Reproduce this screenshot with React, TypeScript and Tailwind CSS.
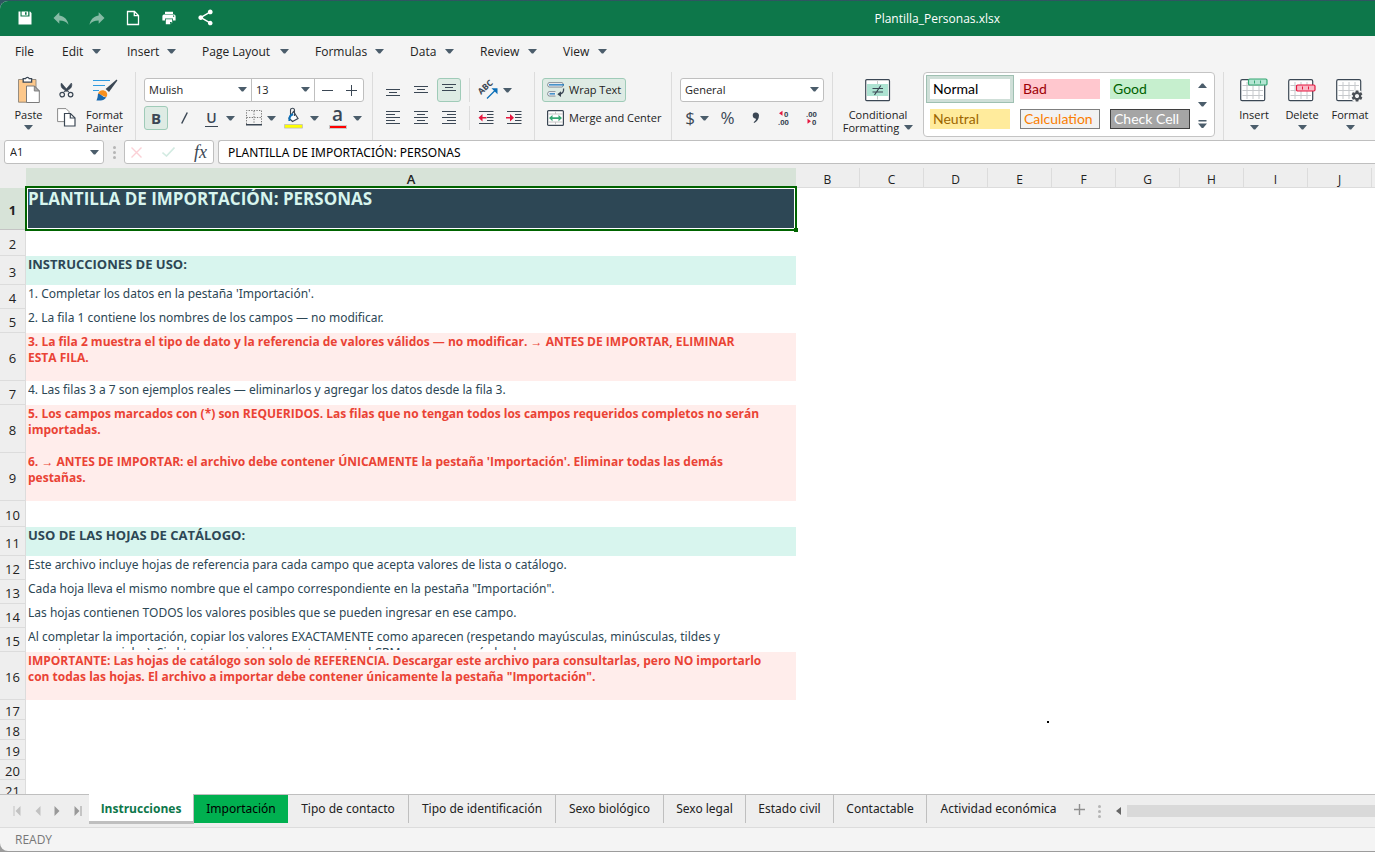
import React from "react";
import { MdReply, MdShare, MdSettings } from "react-icons/md";

const INK = "#3b4754";

/* ---------- small shared pieces ---------- */

function Caret({ className = "" }: { className?: string }) {
  return (
    <svg width="9" height="5" viewBox="0 0 9 5" className={"shrink-0 " + className} aria-hidden="true">
      <path d="M0 0h9L5.2 4.4h-1.4z" fill="#4b5d6b" />
    </svg>
  );
}

function Separator() {
  return <div className="w-px shrink-0 self-stretch bg-[#dcdcdc]" />;
}

function Tool({
  label,
  active = false,
  className = "w-7",
  children,
}: {
  label: string;
  active?: boolean;
  className?: string;
  children: React.ReactNode;
}) {
  return (
    <button
      type="button"
      aria-label={label}
      className={
        "flex h-6 shrink-0 items-center justify-center rounded-[3px] border " +
        (active ? "border-[#9fcbb8] bg-[#deebe4] " : "border-transparent ") +
        className
      }
    >
      {children}
    </button>
  );
}

function Select({ label, value, className }: { label: string; value: string; className: string }) {
  return (
    <div className={"relative h-full " + className}>
      <select
        aria-label={label}
        defaultValue={value}
        className="block h-full w-full appearance-none bg-transparent pl-1 text-[11px] text-[#222] outline-none"
      >
        <option>{value}</option>
      </select>
      <Caret className="pointer-events-none absolute top-2 right-1" />
    </div>
  );
}

/* ---------- title bar icons ---------- */

function SaveIcon() {
  return (
    <svg width="14" height="14" viewBox="0 0 14 14" aria-hidden="true">
      <path d="M.5.5h2v5h9v-5h.6l1.4 1.4v11.6H.5z" fill="#fff" />
      <path d="M3.6.5h6.6v4H3.6z" fill="#fff" />
      <path d="M7 1.3h1.6v2.4H7z" fill="#0d774a" />
    </svg>
  );
}

function NewIcon() {
  return (
    <svg width="14" height="16" viewBox="0 0 14 16" fill="none" stroke="#fff" strokeWidth="1.3" aria-hidden="true">
      <path d="M1.5 1.5h7l4 4v9h-11z" />
      <path d="M8.3 1.5v4.2h4.2" />
    </svg>
  );
}

function PrintIcon() {
  return (
    <svg width="14" height="14" viewBox="0 0 14 14" aria-hidden="true">
      <path d="M3 .8h8V3H3z" fill="#fff" />
      <path d="M2 3.6h10a1.6 1.6 0 0 1 1.6 1.6v4.4H11V7.4H3v2.2H.4V5.2A1.6 1.6 0 0 1 2 3.6z" fill="#fff" />
      <path d="M3.8 8.2h6.4v3L8.3 13.2H3.8z" fill="#fff" />
      <path d="M8 11h2.2L8 13.2z" fill="#0d774a" />
      <path d="M11 4.6h1.2v1.2H11z" fill="#0d774a" />
    </svg>
  );
}

/* ---------- ribbon icons ---------- */

function PasteIcon() {
  return (
    <svg width="24" height="28" viewBox="0 0 24 28" aria-hidden="true">
      <path d="M1.5 3.5h17.5v22.7H1.5z" fill="#fdc88b" stroke="#8b8378" strokeWidth="0.9" />
      <path d="M6.2 2.6h2.4a1.9 1.9 0 0 1 3.6 0h2.4v3.6H6.2z" fill="#fff" stroke={INK} strokeWidth="1.3" />
      <path d="M9.5 10h8l4.8 4.8v11.7H9.5z" fill="#fff" stroke="#7b7b7b" strokeWidth="1" />
      <path d="M17.3 10v5h5z" fill="#aaa" stroke="#7b7b7b" strokeWidth="0.9" />
    </svg>
  );
}

function CutIcon() {
  return (
    <svg width="15" height="16" viewBox="0 0 15 16" fill="none" stroke={INK} aria-hidden="true">
      <circle cx="3.2" cy="12.6" r="2.3" strokeWidth="1.2" />
      <circle cx="11.6" cy="12.6" r="2.3" strokeWidth="1.2" />
      <path d="M4.3 10.6 12.4 1c.9 1.800.4 4.300-1.400 5.700L6.600 9.600" fill={INK} strokeWidth="0.6" />
      <path d="M10.500 10.600 2.400 1c-.9 1.800-.4 4.300 1.400 5.700l4.400 2.900" fill={INK} strokeWidth="0.6" />
    </svg>
  );
}

function CopyIcon() {
  return (
    <svg width="19" height="19" viewBox="0 0 19 19" fill="#fff" aria-hidden="true">
      <path d="M.6.6H9l3 3v10H.6z" stroke="#8a8a8a" strokeWidth="1" />
      <path d="M7.500 5.500h6l4.500 4.500v8H7.500z" stroke={INK} strokeWidth="1.200" />
      <path d="M13.300 5.500V10H18" fill="none" stroke={INK} strokeWidth="1.200" />
    </svg>
  );
}

function PainterIcon() {
  return (
    <svg width="26" height="24" viewBox="0 0 26 24" aria-hidden="true">
      <path d="M1 2.500h17M1 7.500h12M1 12.500h6" stroke="#2f9be0" strokeWidth="1.200" />
      <path d="m24.600 1.600.8.800-8.400 11.500-3.400-2.800z" fill={INK} />
      <path d="M6 15.500c1.200-3.300 5.400-4.500 8.200-1.700 1.600 1.800 1.300 4.400-.2 5.400z" fill="#f78f1e" />
      <path d="M6 15.500c-.2 3-.6 5.200-1.600 7 4.200.4 8.400-.3 10-3.600-2.800 1.400-5-2.600-8.400-3.400z" fill="#1a68ad" />
    </svg>
  );
}

function BordersIcon() {
  return (
    <svg width="18" height="16" viewBox="0 0 18 16" fill="none" stroke={INK} aria-hidden="true">
      <path d="M1.500 14V.5h15V14M9 1v13M1.500 7.500h15" strokeDasharray="1.300 1.300" strokeWidth="1" stroke="#777" />
      <path d="M1 14.800h16" strokeWidth="1.600" />
    </svg>
  );
}

function FillIcon() {
  return (
    <svg width="20" height="22" viewBox="0 0 20 22" aria-hidden="true">
      <path d="M9.500 4.500 14 11.500 8.500 14.500 5 11.200z" fill="#fff" stroke={INK} strokeWidth="1.200" />
      <path d="M6.500 9V3.200C6.500.6 10.500.6 10.500 3.200V9" fill="none" stroke={INK} strokeWidth="1.100" />
      <path d="M9.200 7.200C5.800 8 5 10.400 5.400 14" fill="none" stroke="#0b6fb8" strokeWidth="2" />
      <path d="M.5 17.500h18v3.600H.5z" fill="#ff0" stroke="#bcbcbc" strokeWidth="0.800" />
    </svg>
  );
}

function FontColorGlyph() {
  return (
    <span className="flex flex-col items-center">
      <span className="h-[18px] text-[19px] leading-[15px] font-semibold text-[#3b4754]">a</span>
      <span className="h-1 w-[18px] border border-[#c9c9c9] bg-[#f00]" />
    </span>
  );
}

function Lines({ rows }: { rows: [number, number, number][] }) {
  return (
    <svg width="16" height="16" viewBox="0 0 16 16" stroke={INK} strokeWidth="1" aria-hidden="true">
      {rows.map(([x1, x2, y]) => (
        <path key={y} d={`M${x1} ${y + 0.5}H${x2}`} />
      ))}
    </svg>
  );
}

function OrientationIcon() {
  return (
    <svg width="22" height="20" viewBox="0 0 22 20" overflow="visible" aria-hidden="true">
      <text x="0" y="0" transform="translate(4 15) rotate(-42)" fontSize="8.500" fontWeight="700" fill={INK} fontFamily="Open Sans, sans-serif">
        ABC
      </text>
      <path d="M10 18.500 18.500 10" stroke="#0b6fb8" strokeWidth="1.300" />
      <path d="M14.500 8.200h6v6z" fill="#0b6fb8" />
    </svg>
  );
}

function IndentIcon({ inward }: { inward: boolean }) {
  return (
    <svg width="16" height="14" viewBox="0 0 16 14" aria-hidden="true">
      <path d="M1 .5h14.500M9 3.500h6.500M9 6.500h6.500M9 9.500h6.500M1 12.500h14.500" stroke={INK} />
      {inward ? (
        <path d="M0 6h4V3l4 3.800L4 10.500V7.500H0z" fill="#e5173f" />
      ) : (
        <path d="M8.500 6H4.500V3L.5 6.800l4 3.700V7.500h4z" fill="#e5173f" />
      )}
    </svg>
  );
}

function WrapIcon() {
  return (
    <svg width="18" height="16" viewBox="0 0 18 16" fill="none" aria-hidden="true">
      <path d="M15 .700H2C.2.700.2 5 2 5h13c1.800 0 1.800-4.300 0-4.300z" fill="#fff" stroke="#7e8790" strokeWidth="1" />
      <path d="M2 2.900h15" stroke="#0b6fb8" strokeWidth="1.300" />
      <path d="M8.500 9.700H2c-1.800 0-1.800 4.300 0 4.300h6.500" fill="#fff" stroke="#7e8790" strokeWidth="1" />
      <path d="M2.500 11.900H8" stroke="#0b6fb8" strokeWidth="1.300" />
      <path d="M16.600 6.500c.3 3.500-1.200 5.400-4.600 5.700" stroke={INK} strokeWidth="1.300" />
      <path d="M14 9.300v5.800L10.300 12.200z" fill={INK} />
    </svg>
  );
}

function MergeIcon() {
  return (
    <svg width="17" height="16" viewBox="0 0 17 16" fill="none" aria-hidden="true">
      <rect x="0.600" y="0.600" width="15.800" height="14.800" rx="1" fill="#fff" stroke={INK} strokeWidth="1.200" />
      <path d="M8.500 1.200V4M8.500 12v2.800M1.200 4h14.600M1.200 12h14.600" stroke="#c4c4c4" />
      <path d="M4 7.200h9v1.800H4z" fill="#34a873" />
      <path d="M5.500 5v6.200L2 8.100zM11.500 5v6.200L15 8.100z" fill="#34a873" />
    </svg>
  );
}

function DecimalIcon({ increase }: { increase: boolean }) {
  return (
    <svg width="14" height="16" viewBox="0 0 14 16" fontFamily="Open Sans, sans-serif" fontSize="7.500" fontWeight="700" fill={INK} aria-hidden="true">
      {increase ? (
        <>
          <path d="M5.500 .8v5L2 3.300z" fill="#e5173f" />
          <text x="7" y="6.500">0</text>
          <text x="1" y="14.500">.00</text>
        </>
      ) : (
        <>
          <text x="1" y="6.500">.00</text>
          <path d="M2.500 8.800v5L6 11.300z" fill="#e5173f" />
          <text x="7" y="14.500">0</text>
        </>
      )}
    </svg>
  );
}

function ConditionalIcon() {
  return (
    <svg width="26" height="23" viewBox="0 0 26 23" aria-hidden="true">
      <rect x="0.700" y="0.700" width="23.800" height="21" rx="1" fill="#fff" stroke={INK} strokeWidth="1.200" />
      <path d="M2 5h21.200v12H2z" fill="#ade3d2" />
      <path d="M12.500 2v3M12.500 17v3.500" stroke="#c9c9c9" />
      <path d="M7.500 9.500h10.500M7.500 13h10.500M15.800 6.500 9.500 16" stroke={INK} strokeWidth="1.200" />
    </svg>
  );
}

function GridIcon({ kind }: { kind: "insert" | "delete" | "format" }) {
  return (
    <svg width="28" height="24" viewBox="0 0 28 24" aria-hidden="true">
      <rect x="0.700" y="1.700" width="24" height="21" rx="1.500" fill="#fff" stroke={INK} strokeWidth="1.200" />
      <path d="M7 4v17M13 4v17M19 4v17M2.500 7.500h20.500M2.500 12.500h20.500M2.500 17.500h20.500" stroke="#c6c9cc" />
      {kind === "insert" && (
        <>
          <rect x="8.500" y="1" width="18.500" height="6" rx="1.200" fill="#b5e5d3" stroke="#34a873" strokeWidth="1.200" />
          <path d="M14.500 2.500v3M20.500 2.500v3" stroke="#34a873" />
        </>
      )}
      {kind === "delete" && (
        <>
          <rect x="8.500" y="7" width="18.500" height="6" rx="1.200" fill="#f9b9c6" stroke="#e5173f" strokeWidth="1.200" />
          <path d="M14.500 8.500v3M20.500 8.500v3" stroke="#e5173f" />
        </>
      )}
      {kind === "format" && (
        <>
          <circle cx="21" cy="18" r="6.500" fill="#f4f4f4" />
          <g transform="translate(14.200 11.200) scale(.57)">
            <MdSettings size={24} color="#4a4f55" />
          </g>
        </>
      )}
    </svg>
  );
}

/* ---------- data ---------- */

const MENUS = [
  { name: "Edit", width: "w-[65px]" },
  { name: "Insert", width: "w-[75px]" },
  { name: "Page Layout", width: "w-[113px]" },
  { name: "Formulas", width: "w-[95px]" },
  { name: "Data", width: "w-[70px]" },
  { name: "Review", width: "w-[83px]" },
  { name: "View", width: "w-[70px]" },
];

const STYLES = [
  { name: "Normal", look: "bg-white text-black outline-3 outline-[#cfdfd8] ring-4 ring-[#9fc0b2]" },
  { name: "Bad", look: "bg-[#ffc7ce] text-[#9c0006]" },
  { name: "Good", look: "bg-[#c6efce] text-[#006100]" },
  { name: "Neutral", look: "bg-[#ffeb9c] text-[#9c6500]" },
  { name: "Calculation", look: "border border-[#7f7f7f] bg-[#f2f2f2] text-[#fa7d00]" },
  { name: "Check Cell", look: "border border-[#3f3f3f] bg-[#a5a5a5] text-white" },
];

const TITLE = "bg-[#2d4755] text-[17px] leading-[22px] font-bold text-[#d8f5ee]";
const HEAD = "bg-[#d8f5ee] text-[13px] leading-4 font-bold text-[#2d4755]";
const WARN = "bg-[#ffedeb] pt-px text-[12px] leading-4 font-bold text-[#ea4335]";
const BODY = "pt-px font-['Noto_Sans'] text-[12px] leading-4 text-[#2d4755]";

const ROWS: { h: string; look?: string; text?: string; clip?: string }[] = [
  { h: "h-[42px]", look: TITLE, text: "PLANTILLA DE IMPORTACIÓN: PERSONAS" },
  { h: "h-[26px]" },
  { h: "h-[29px]", look: HEAD, text: "INSTRUCCIONES DE USO:" },
  { h: "h-[24px]", look: BODY, text: "1. Completar los datos en la pestaña 'Importación'." },
  { h: "h-[24px]", look: BODY, text: "2. La fila 1 contiene los nombres de los campos — no modificar." },
  {
    h: "h-[48px]",
    look: WARN,
    text: "3. La fila 2 muestra el tipo de dato y la referencia de valores válidos — no modificar. → ANTES DE IMPORTAR, ELIMINAR\nESTA FILA.",
  },
  { h: "h-[24px]", look: BODY, text: "4. Las filas 3 a 7 son ejemplos reales — eliminarlos y agregar los datos desde la fila 3." },
  {
    h: "h-[48px]",
    look: WARN,
    text: "5. Los campos marcados con (*) son REQUERIDOS. Las filas que no tengan todos los campos requeridos completos no serán\nimportadas.",
  },
  {
    h: "h-[48px]",
    look: WARN,
    text: "6. → ANTES DE IMPORTAR: el archivo debe contener ÚNICAMENTE la pestaña 'Importación'. Eliminar todas las demás\npestañas.",
  },
  { h: "h-[26px]" },
  { h: "h-[29px]", look: HEAD, text: "USO DE LAS HOJAS DE CATÁLOGO:" },
  { h: "h-[24px]", look: BODY, text: "Este archivo incluye hojas de referencia para cada campo que acepta valores de lista o catálogo." },
  { h: "h-[24px]", look: BODY, text: 'Cada hoja lleva el mismo nombre que el campo correspondiente en la pestaña "Importación".' },
  { h: "h-[24px]", look: BODY, text: "Las hojas contienen TODOS los valores posibles que se pueden ingresar en ese campo." },
  {
    h: "h-[24px]",
    look: BODY,
    clip: "max-h-[21px]",
    text: "Al completar la importación, copiar los valores EXACTAMENTE como aparecen (respetando mayúsculas, minúsculas, tildes y\ncaracteres especiales). Si el texto no coincide exactamente, el CRM no reconocerá el valor.",
  },
  {
    h: "h-[48px]",
    look: WARN,
    text: 'IMPORTANTE: Las hojas de catálogo son solo de REFERENCIA. Descargar este archivo para consultarlas, pero NO importarlo\ncon todas las hojas. El archivo a importar debe contener únicamente la pestaña "Importación".',
  },
  { h: "h-[20px]" },
  { h: "h-[20px]" },
  { h: "h-[20px]" },
  { h: "h-[20px]" },
  { h: "h-[20px]" },
];

const COLUMNS = ["B", "C", "D", "E", "F", "G", "H", "I", "J"];

const TABS = [
  { name: "Tipo de contacto", width: "w-[121px]" },
  { name: "Tipo de identificación", width: "w-[147px]" },
  { name: "Sexo biológico", width: "w-[108px]" },
  { name: "Sexo legal", width: "w-[82px]" },
  { name: "Estado civil", width: "w-[88px]" },
  { name: "Contactable", width: "w-[93px]" },
  { name: "Actividad económica", width: "w-[143px]" },
];

/* ---------- sections ---------- */

function TitleBar() {
  const icon = "flex h-9 w-9 items-center justify-center";
  return (
    <header className="flex h-[35px] shrink-0 items-center bg-[#0d774a] pl-[7px]">
      <div className="flex flex-1 pb-0.5">
        <button type="button" aria-label="Save" className={icon}><SaveIcon /></button>
        <button type="button" aria-label="Undo" className={icon}><MdReply size={20} color="#86bba5" /></button>
        <button type="button" aria-label="Redo" className={icon}><MdReply size={20} color="#86bba5" className="-scale-x-100" /></button>
        <button type="button" aria-label="New" className={icon}><NewIcon /></button>
        <button type="button" aria-label="Print" className={icon}><PrintIcon /></button>
        <button type="button" aria-label="Share" className={icon}><MdShare size={19} color="#fff" /></button>
      </div>
      <h1 className="mr-[375px] text-[12px] text-white">Plantilla_Personas.xlsx</h1>
    </header>
  );
}

function MenuBar() {
  return (
    <nav className="flex h-[31px] shrink-0 items-center pl-[15px] text-[12px] text-[#222]">
      <button type="button" className="w-[47px] text-left">File</button>
      {MENUS.map((m) => (
        <button key={m.name} type="button" className={"flex items-center justify-between pr-[26px] whitespace-nowrap " + m.width}>
          {m.name}
          <Caret />
        </button>
      ))}
    </nav>
  );
}

function BigButton({ icon, children, className }: { icon: React.ReactNode; children: React.ReactNode; className: string }) {
  return (
    <button type="button" className={"flex shrink-0 flex-col items-center text-[11px] leading-[13px] text-[#222] " + className}>
      <span className="flex h-9 items-center justify-center">{icon}</span>
      {children}
    </button>
  );
}

function Ribbon() {
  return (
    <div role="toolbar" aria-label="Home" className="flex h-[73px] shrink-0 items-start overflow-hidden pt-[5px]">
      <div className="flex h-16 w-[135px] shrink-0 pl-1">
        <BigButton className="w-[49px]" icon={<PasteIcon />}>
          Paste
          <Caret className="mt-1" />
        </BigButton>
        <div className="flex w-[27px] flex-col items-center gap-1 pt-[7px]">
          <button type="button" aria-label="Cut" className="flex h-[22px] items-center"><CutIcon /></button>
          <button type="button" aria-label="Copy" className="flex h-6 items-center"><CopyIcon /></button>
        </div>
        <BigButton className="w-[49px]" icon={<PainterIcon />}>
          Format
          <br />
          Painter
        </BigButton>
      </div>
      <Separator />

      <div className="flex h-16 w-[236px] shrink-0 flex-col gap-1 pt-[6px] pl-2">
        <div className="flex h-6 w-[220px] items-stretch rounded-[3px] border border-[#bfbfbf] bg-white">
          <Select label="Font" value="Mulish" className="w-[106px]" />
          <div className="w-px bg-[#bfbfbf]" />
          <Select label="Font size" value="13" className="w-[62px]" />
          <div className="w-px bg-[#bfbfbf]" />
          <button type="button" aria-label="Decrease font size" className="flex flex-1 items-center justify-center">
            <svg width="11" height="11" stroke={INK}><path d="M0 5.500h11" /></svg>
          </button>
          <button type="button" aria-label="Increase font size" className="flex flex-1 items-center justify-center">
            <svg width="11" height="11" stroke={INK}><path d="M0 5.500h11M5.500 0v11" /></svg>
          </button>
        </div>
        <div className="flex items-center">
          <Tool label="Bold" active className="w-6 text-[15px] font-bold text-[#3b4754]">B</Tool>
          <Tool label="Italic" className="w-8">
            <svg width="7" height="12" stroke={INK} strokeWidth="1.500"><path d="M6.300.5.7 11.500" /></svg>
          </Tool>
          <Tool label="Underline" className="w-10 gap-2">
            <span className="h-[17px] border-b border-[#3b4754] px-px text-[14px] leading-[15px] font-semibold text-[#3b4754]">U</span>
            <Caret />
          </Tool>
          <Tool label="Borders" className="w-10 gap-1"><BordersIcon /><Caret /></Tool>
          <Tool label="Fill color" className="w-[42px] gap-1.5"><FillIcon /><Caret /></Tool>
          <Tool label="Font color" className="w-[46px] gap-1.5"><FontColorGlyph /><Caret /></Tool>
        </div>
      </div>
      <Separator />

      <div className="flex h-16 w-[161px] shrink-0 flex-col gap-1 pt-[6px] pl-[6px]">
        <div className="flex items-center">
          <Tool label="Bottom align"><Lines rows={[[1, 15, 7], [4, 12, 10], [1, 15, 13]]} /></Tool>
          <Tool label="Middle align"><Lines rows={[[1, 15, 4], [4, 12, 7], [1, 15, 10]]} /></Tool>
          <Tool label="Top align" active className="mx-0.5 w-6"><Lines rows={[[1, 15, 2], [4, 12, 5], [1, 15, 8]]} /></Tool>
          <div className="ml-1.5 h-6 w-px bg-[#dcdcdc]" />
          <Tool label="Orientation" className="ml-1 w-10 gap-1"><OrientationIcon /><Caret /></Tool>
        </div>
        <div className="flex items-center">
          <Tool label="Align left"><Lines rows={[[1, 15, 1], [1, 10, 4], [1, 15, 7], [1, 10, 10], [1, 15, 13]]} /></Tool>
          <Tool label="Align center"><Lines rows={[[1, 15, 1], [4, 12, 4], [1, 15, 7], [4, 12, 10], [1, 15, 13]]} /></Tool>
          <Tool label="Align right"><Lines rows={[[1, 15, 1], [6, 15, 4], [1, 15, 7], [6, 15, 10], [1, 15, 13]]} /></Tool>
          <div className="ml-1.5 h-6 w-px bg-[#dcdcdc]" />
          <Tool label="Decrease indent" className="ml-1 w-6"><IndentIcon inward={false} /></Tool>
          <Tool label="Increase indent" className="ml-1 w-6"><IndentIcon inward /></Tool>
        </div>
      </div>
      <Separator />

      <div className="flex h-16 w-[136px] shrink-0 flex-col items-start gap-1 pt-[6px] pl-[7px] text-[11px] whitespace-nowrap text-[#222]">
        <button type="button" className="flex h-6 items-center gap-1 rounded-[3px] border border-[#9fcbb8] bg-[#deebe4] px-1">
          <WrapIcon />
          Wrap Text
        </button>
        <button type="button" className="flex h-6 items-center gap-[5px] px-[5px]">
          <MergeIcon />
          Merge and Center
        </button>
      </div>
      <Separator />

      <div className="flex h-16 w-[160px] shrink-0 flex-col gap-1 pt-[6px] pl-2">
        <div className="h-6 w-36 rounded-[3px] border border-[#bfbfbf] bg-white">
          <Select label="Number format" value="General" className="w-full" />
        </div>
        <div className="flex items-center text-[#3b4754]">
          <Tool label="Currency" className="w-[34px] gap-[5px] text-[17px]">$<Caret /></Tool>
          <Tool label="Percent" className="w-[27px] text-[17px]">%</Tool>
          <Tool label="Comma style" className="w-[29px]">
            <svg width="8" height="12" viewBox="0 0 8 12" fill={INK}><path d="M3.500.5a3 3 0 0 1 3.500 3c0 3.500-2 6-4.800 7.500l-.6-.8c1.600-1 2.400-2.400 2.500-3.600A3 3 0 1 1 3.500.500z" /></svg>
          </Tool>
          <Tool label="Increase decimal"><DecimalIcon increase /></Tool>
          <Tool label="Decrease decimal"><DecimalIcon increase={false} /></Tool>
        </div>
      </div>
      <Separator />

      <BigButton className="w-[90px]" icon={<ConditionalIcon />}>
        Conditional
        <span className="flex items-center gap-[5px]">
          Formatting
          <Caret />
        </span>
      </BigButton>

      <div className="flex h-[65px] w-[292px] shrink-0 rounded-[4px] border border-[#c4c4c4] bg-white">
        <div className="grid grid-cols-3 content-start gap-2.5 pt-[6px] pl-[6px]">
          {STYLES.map((s) => (
            <button
              key={s.name}
              type="button"
              className={"flex h-5 w-20 items-center px-[3px] font-[Lato] text-[14px] leading-[18px] whitespace-nowrap " + s.look}
            >
              {s.name}
            </button>
          ))}
        </div>
        <div className="flex flex-1 flex-col items-center justify-between pt-[10px] pb-[8px]">
          <button type="button" aria-label="Previous styles"><Caret className="block rotate-180" /></button>
          <button type="button" aria-label="Next styles"><Caret className="block" /></button>
          <button type="button" aria-label="More styles">
            <svg width="9" height="8" viewBox="0 0 9 8" fill="#4b5d6b" className="block"><path d="M.5 0h8v1.500h-8zM0 3.500h9L5.200 7.900h-1.400z" /></svg>
          </button>
        </div>
      </div>
      <div className="w-2 shrink-0" />
      <Separator />
      <div className="flex h-16 pl-[6px]">
        <BigButton className="w-12" icon={<GridIcon kind="insert" />}>Insert<Caret className="mt-1" /></BigButton>
        <BigButton className="w-12" icon={<GridIcon kind="delete" />}>Delete<Caret className="mt-1" /></BigButton>
        <BigButton className="w-12" icon={<GridIcon kind="format" />}>Format<Caret className="mt-1" /></BigButton>
      </div>
    </div>
  );
}

function Dots() {
  return (
    <svg width="3" height="13" viewBox="0 0 3 13" fill="#b5b5b5" className="shrink-0" aria-hidden="true">
      <circle cx="1.500" cy="1.500" r="1.500" />
      <circle cx="1.500" cy="6.500" r="1.500" />
      <circle cx="1.500" cy="11.500" r="1.500" />
    </svg>
  );
}

function FormulaBar() {
  const box = "flex h-6 items-center rounded-[3px] border border-[#bfbfbf] bg-white";
  return (
    <div className="flex h-7 shrink-0 items-start bg-[#eee] pl-1">
      <div className={box + " w-[100px] pr-1"}>
        <input aria-label="Cell reference" defaultValue="A1" className="min-w-0 flex-1 pl-[5px] text-[11px] text-[#222] outline-none" />
        <Caret />
      </div>
      <div className="flex h-6 w-5 items-center justify-center"><Dots /></div>
      <div className={box + " w-[90px] justify-between px-[6px]"}>
        <button type="button" aria-label="Cancel">
          <svg width="11" height="11" stroke="#fbd0d6" strokeWidth="1.400"><path d="m.5.5 10 10M10.500.5l-10 10" /></svg>
        </button>
        <button type="button" aria-label="Enter">
          <svg width="13" height="10" fill="none" stroke="#d3ebe2" strokeWidth="1.600"><path d="M.5 5.500 4.500 9 12.500.5" /></svg>
        </button>
        <button type="button" aria-label="Insert function" className="font-[Liberation_Serif] text-[18px] leading-5 text-[#3b4754] italic">
          fx
        </button>
      </div>
      <input
        aria-label="Formula"
        defaultValue="PLANTILLA DE IMPORTACIÓN: PERSONAS"
        className="ml-1 h-6 min-w-0 flex-1 rounded-l-[3px] border border-r-0 border-[#bfbfbf] bg-white pl-[9px] font-['Noto_Sans'] text-[12px] text-black outline-none"
      />
    </div>
  );
}

function Sheet() {
  return (
    <main className="relative min-h-0 flex-1 overflow-hidden bg-white">
      <table className="w-full table-fixed border-separate border-spacing-0">
        <colgroup>
          <col className="w-[26px]" />
          <col className="w-[770px]" />
          {COLUMNS.map((c) => (
            <col key={c} className="w-16" />
          ))}
          <col />
        </colgroup>
        <thead>
          <tr className="h-5 bg-[#eee] text-[13px] leading-[19px] text-[#222]">
            <td className="p-0" />
            <th scope="col" className="border-b border-[#c4c4c4] bg-[#d7e3d8] p-0 pt-1 leading-[15px] font-semibold">A</th>
            {COLUMNS.map((c) => (
              <th key={c} scope="col" className="border-r border-b border-[#dcdcdc] p-0 pt-1 text-[12px] leading-[15px] font-normal">
                {c}
              </th>
            ))}
            <td className="border-b border-[#dcdcdc] p-0" />
          </tr>
        </thead>
        <tbody>
          {ROWS.map((r, i) => (
            <tr key={i} className={r.h}>
              <th
                scope="row"
                className={
                  "border-r border-b p-0 pt-[3px] text-[13px] leading-4 text-[#222] " +
                  (i === 0 ? "border-[#c4c4c4] bg-[#d7e3d8] font-bold" : "border-[#dcdcdc] bg-[#eee] font-normal")
                }
              >
                {i + 1}
              </th>
              <td className={"relative px-0 pb-0 pl-[2px] align-top whitespace-pre " + (r.look ?? "")}>
                {r.text && <div className={"overflow-hidden " + (r.clip ?? "")}>{r.text}</div>}
                {i === 0 && (
                  <div className="absolute -inset-x-px -top-0.5 -bottom-px border-2 border-[#006400]">
                    <div className="h-full border border-white" />
                    <div className="absolute -right-[3px] -bottom-[3px] size-1 bg-[#006400]" />
                  </div>
                )}
              </td>
            </tr>
          ))}
        </tbody>
      </table>
      <div className="absolute top-[553px] left-[1047px] size-0.5 bg-black" />
    </main>
  );
}

function SheetNav({ label, first, flip, dim }: { label: string; first?: boolean; flip?: boolean; dim?: boolean }) {
  return (
    <button type="button" aria-label={label} className="flex w-5 items-center justify-center">
      <svg width="9" height="10" viewBox="0 0 9 10" fill={dim ? "#c2c2c2" : "#999"} className={flip ? "-scale-x-100" : ""}>
        <path d="M7.500 0v10L2.500 5z" />
        {first && <path d="M.5 0h1v10h-1z" />}
      </svg>
    </button>
  );
}

function SheetTabs() {
  return (
    <div className="flex h-[33px] shrink-0 border-t border-[#bfbfbf] bg-[#eee] font-['Noto_Sans',sans-serif] text-[12px] text-[#222]">
      <div className="flex h-8 w-[89px] shrink-0 pl-[7px]">
        <SheetNav label="First sheet" first dim />
        <SheetNav label="Previous sheet" dim />
        <SheetNav label="Next sheet" flip />
        <SheetNav label="Last sheet" first flip />
      </div>
      <div role="tablist" className="flex h-7 shrink-0">
        <button
          type="button"
          role="tab"
          aria-selected="true"
          className="-mt-0.5 h-[31px] w-[105px] border-t border-r border-b-3 border-[#bfbfbf] bg-white pt-0.5 font-['Open_Sans'] font-bold text-[#0d774a]"
        >
          Instrucciones
        </button>
        <button type="button" role="tab" aria-selected="false" className="w-[94px] bg-[#00b050] text-black">
          Importación
        </button>
        {TABS.map((t, i) => (
          <button
            key={t.name}
            type="button"
            role="tab"
            aria-selected="false"
            className={"whitespace-nowrap " + (i < TABS.length - 1 ? "border-r border-[#bfbfbf] " : "") + t.width}
          >
            {t.name}
          </button>
        ))}
      </div>
      <button type="button" aria-label="Add sheet" className="flex h-7 w-[18px] shrink-0 items-center justify-center">
        <svg width="11" height="11" stroke="#8f8f8f" strokeWidth="1.400"><path d="M0 5.500h11M5.500 0v11" /></svg>
      </button>
      <div className="flex h-8 w-[22px] shrink-0 items-center justify-center"><Dots /></div>
      <button type="button" aria-label="Scroll left" className="flex h-8 w-[17px] shrink-0 items-center justify-center">
        <svg width="5" height="8" fill="#666"><path d="M5 0v8L0 4z" /></svg>
      </button>
      <div className="mt-2.5 h-3 flex-1 bg-[#d9d9d9]" />
    </div>
  );
}

export default function App() {
  return (
    <div className="h-screen bg-linear-to-b from-[#2f5561] to-[#9c9c9c] py-px font-['Open_Sans',sans-serif]">
      <div className="flex h-full flex-col overflow-hidden rounded-l-lg bg-[#f4f4f4]">
        <TitleBar />
        <MenuBar />
        <Ribbon />
        <FormulaBar />
        <Sheet />
        <SheetTabs />
        <footer className="flex h-6 shrink-0 items-center border-t border-[#dcdcdc] pt-px pl-[15px] text-[12px] text-[#777]">READY</footer>
      </div>
    </div>
  );
}
